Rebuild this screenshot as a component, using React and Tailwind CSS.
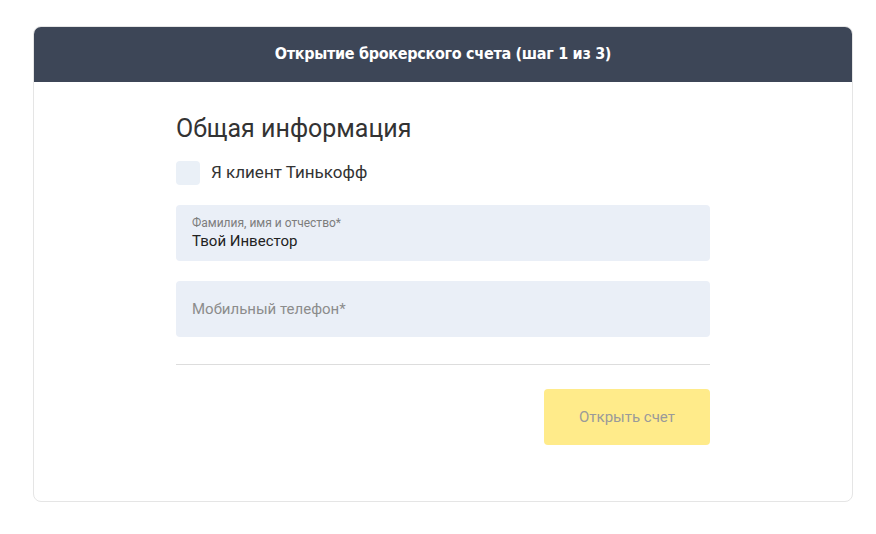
export default function App() {
  return (
    <div className="w-[876px] h-[534px] bg-white pt-[26px] pl-[33px]" style={{ fontFamily: 'Roboto, "Liberation Sans", sans-serif' }}>
      <div className="w-[820px] h-[476px] rounded-[8px] border border-[#e5e5e5] overflow-hidden flex flex-col">
        <div className="h-[56px] bg-[#3d4657] flex items-center justify-center -mx-px -mt-px">
          <span className="text-white text-[16px] font-bold tracking-[-0.3px]" style={{ fontFamily: '"DejaVu Sans Condensed", "Roboto Condensed", Roboto, sans-serif' }}>
            Открытие брокерского счета (шаг 1 из 3)
          </span>
        </div>
        <div className="pl-[142px] w-[676px] pt-[31px]">
          <div className="text-[25px] leading-[32px] text-[#333]">Общая информация</div>
          <div className="flex items-center gap-[11px] mt-[16px] h-[24px]">
            <div className="w-[24px] h-[24px] rounded-[4px] bg-[#eaf0f7]"></div>
            <span className="text-[17px] text-[#333]">Я клиент Тинькофф</span>
          </div>
          <div className="mt-[20px] h-[56px] rounded-[4px] bg-[#eaeff7] pl-[16px] pt-[10px]">
            <div className="text-[12px] leading-[16px] text-[#7d7d7d]">Фамилия, имя и отчество*</div>
            <div className="text-[15px] leading-[20px] text-[#222]">Твой Инвестор</div>
          </div>
          <div className="mt-[20px] h-[56px] rounded-[4px] bg-[#eaeff7] pl-[16px] flex items-center">
            <span className="text-[15px] text-[#8c8c8c]">Мобильный телефон*</span>
          </div>
          <div className="mt-[27px] h-px bg-[#dddddd]"></div>
          <div className="mt-[24px] flex justify-end">
            <div className="w-[166px] h-[56px] rounded-[4px] bg-[#ffeb8a] flex items-center justify-center text-[15px] text-[#9a9a9a]">
              Открыть счет
            </div>
          </div>
        </div>
      </div>
    </div>
  );
}
